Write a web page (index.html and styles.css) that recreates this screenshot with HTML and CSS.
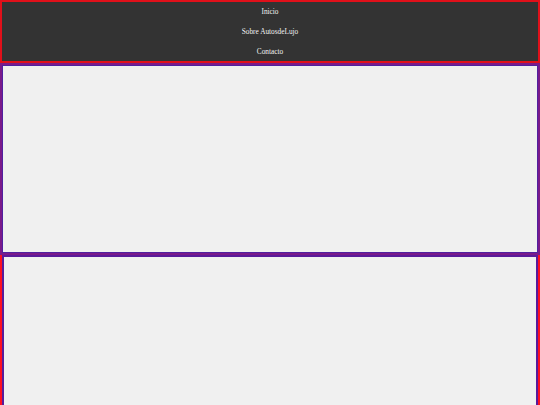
FILE: index.html
```html
<!DOCTYPE html>
<html lang="es">
<head>
<meta charset="utf-8">
<title>AutosdeLujo</title>
<link rel="stylesheet" href="styles.css">
</head>
<body>
<header class="site-header">
  <nav class="nav">
    <ul class="nav-list">
      <li class="nav-item"><a class="nav-link" href="#">Inicio</a></li>
      <li class="nav-item"><a class="nav-link" href="#">Sobre AutosdeLujo</a></li>
      <li class="nav-item"><a class="nav-link" href="#">Contacto</a></li>
    </ul>
  </nav>
</header>
<main class="main">
  <section class="panel panel-first"></section>
  <section class="panel-wrap">
    <div class="panel panel-second"></div>
  </section>
</main>
</body>
</html>
```
FILE: styles.css
```css
html, body {
  margin: 0;
  padding: 0;
  background: #f0f0f0;
  font-family: "Liberation Serif", "Times New Roman", serif;
}
.site-header {
  background: #333333;
  border: 2px solid #e0101a;
  height: 59px;
}
.nav-list {
  list-style: none;
  margin: 0;
  padding: 0;
  display: flex;
  flex-direction: column;
  align-items: center;
}
.nav-item {
  height: 20px;
  line-height: 20px;
  font-size: 7.3px;
}
.nav-link {
  color: #f2f2f2;
  text-decoration: none;
}
.main {
  display: flex;
  flex-direction: column;
}
.panel {
  background: #f0f0f0;
}
.panel-first {
  height: 188px;
  border: 2px solid #7a1a8a;
  box-shadow: inset 0 0 0 1px #5020a0;
}
.panel-wrap {
  border-left: 2px solid #ff1020;
  border-right: 2px solid #ff1020;
  height: 160px;
}
.panel-second {
  height: 100%;
  border: 2px solid #5a1a9a;
}
```
